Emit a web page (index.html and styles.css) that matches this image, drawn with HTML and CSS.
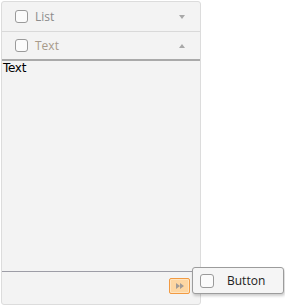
FILE: index.html
```html
<!DOCTYPE html>
<html lang="en">
    <head>
        <meta charset="UTF-8">
        <title>Panel</title>
        <link rel="stylesheet" href="styles.css">
    </head>
    <body>
        <div class="panel">
            <div class="head">
                <span class="check"></span>
                <span class="label">List</span>
                <span class="arrow down"></span>
            </div>
            <div class="head open">
                <span class="check"></span>
                <span class="label label-text">Text</span>
                <span class="arrow up"></span>
            </div>
            <div class="content">Text</div>
            <div class="footer">
                <button class="more">
                    <svg width="8" height="6" viewBox="0 0 8 6"><path d="M0 0L4 3L0 6Z M4 0L8 3L4 6Z" fill="#a09a96"/></svg>
                </button>
            </div>
        </div>

        <div class="popup">
            <span class="check"></span>
            <span class="popup-label">Button</span>
        </div>
    </body>
</html>
```

FILE: styles.css
```css
body { margin: 0; background: #fff; font-family: 'Open Sans', 'DejaVu Sans', sans-serif; }

.panel { margin: 1px 0 0 1px; width: 198px; height: 302px; border: 1px solid #dcdcdc; border-radius: 3px; background: #f3f3f3; display: flex; flex-direction: column; }

.head { height: 29px; display: flex; align-items: center; padding: 0 0 0 13px; border-bottom: 1px solid #d9d9d9; }
.head.open { height: 27px; border-bottom: 2px solid #a9a9a9; }

.check { width: 11px; height: 11px; border: 1px solid #9a9a9a; border-radius: 3px; background: #fbfbfb; box-sizing: content-box; }
.label { margin-left: 7px; font-size: 12px; color: #8c8c8c; flex: 1; }
.label-text { color: #a89a8a; }

.arrow { width: 0; height: 0; margin-right: 15px; border-left: 3px solid transparent; border-right: 3px solid transparent; }
.arrow.down { border-top: 4px solid #a8a8a8; }
.arrow.up { border-bottom: 4px solid #a8a8a8; }

.content { flex: 1; padding: 0 0 0 1px; font-size: 12px; line-height: 14px; color: #000; font-family: 'DejaVu Sans', sans-serif; letter-spacing: -0.3px; }

.footer { height: 33px; border-top: 1px solid #9d9da6; display: flex; justify-content: flex-end; align-items: flex-start; padding: 6px 10px 0 0; box-sizing: border-box; }

.more { width: 21px; height: 16px; padding: 0; border: 1px solid #f29a42; border-radius: 2px; background: #fdd6a2; box-shadow: inset 0 0 0 1px #fee4c0; display: flex; align-items: center; justify-content: center; }

.popup { position: absolute; left: 192px; top: 267px; width: 92px; height: 27px; border: 1px solid #9c9c9c; border-radius: 3px; background: #f5f5f5; box-shadow: 1px 2px 3px rgba(0, 0, 0, 0.2); display: flex; align-items: center; padding-left: 7px; box-sizing: border-box; }
.popup .check { width: 12px; height: 12px; }
.popup-label { margin-left: 13px; font-size: 12px; color: #222; }
```
